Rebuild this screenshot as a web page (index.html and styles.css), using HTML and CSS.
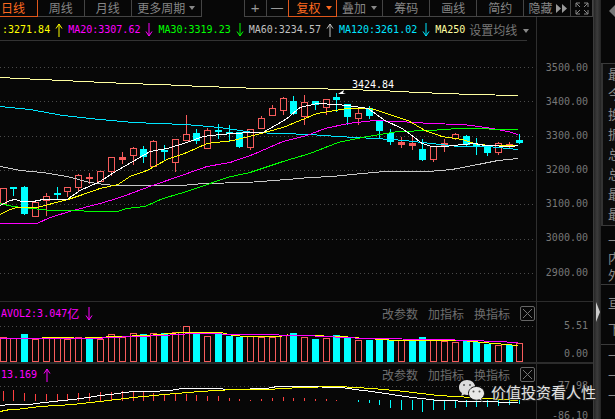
FILE: index.html
```html
<!DOCTYPE html>
<html lang="zh-CN">
<head>
<meta charset="utf-8">
<title>K线</title>
<link rel="stylesheet" href="styles.css">
</head>
<body>
<svg class="defs" width="0" height="0">
  <symbol id="up" viewBox="0 0 10 14"><path d="M5 14V1M2 5.5 5 1l3 4.500" fill="none" stroke="currentColor"/></symbol>
  <symbol id="down" viewBox="0 0 10 14"><path d="M5 0v13M2 8.500 5 13l3-4.500" fill="none" stroke="currentColor"/></symbol>
</svg>
<div class="app">
  <div class="main">
    <nav class="toolbar">
      <span class="btn active first">日线</span>
      <span class="btn">周线</span>
      <span class="btn">月线</span>
      <span class="btn more">更多周期<i class="caret"></i></span>
      <span class="zoom-group"><span class="sq">+</span><span class="sq">—</span></span>
      <span class="btn active boxed">复权<i class="caret"></i></span>
      <span class="btn">叠加<i class="caret"></i></span>
      <span class="btn">筹码</span>
      <span class="btn">画线</span>
      <span class="btn">简约</span>
      <span class="btn hide">隐藏<svg class="dbl" width="12" height="9" viewBox="0 0 12 9"><path d="M1 0l5 4.500L1 9zM7 0l5 4.500L7 9z" fill="#999"/></svg></span>
      <span class="expand"><svg width="14" height="13" viewBox="0 0 14 13"><path d="M1 1l4 4M1 1h4M1 1v4M13 1 9 5M13 1H9M13 1v4M1 12l4-4M1 12h4M1 12V8M13 12 9 8M13 12H9M13 12V8" fill="none" stroke="#888"/></svg></span>
    </nav>
    <section class="pane pane-main">
      <div class="plot">
        <div class="ma-row">
          <span class="c-y">:3271.84</span><svg class="arr c-y"><use href="#up"/></svg>
          <span class="c-m">MA20:3307.62</span><svg class="arr c-m"><use href="#down"/></svg>
          <span class="c-g">MA30:3319.23</span><svg class="arr c-g"><use href="#down"/></svg>
          <span class="c-w">MA60:3234.57</span><svg class="arr c-w"><use href="#up"/></svg>
          <span class="c-c">MA120:3261.02</span><svg class="arr c-c"><use href="#down"/></svg>
          <span class="c-p">MA250</span>
          <span class="setting">设置均线<i class="caret"></i></span>
        </div>
        <div class="chart-wrap">
          <svg id="kline" class="chart" width="536" height="260" viewBox="0 41 536 260"></svg>
          <span class="high">3424.84</span>
        </div>
      </div>
      <div class="axis axis-main">
        <span>3500.00</span><span>3400.00</span><span>3300.00</span><span>3200.00</span><span>3100.00</span><span>3000.00</span><span>2900.00</span>
      </div>
    </section>
    <section class="pane pane-vol">
      <div class="plot">
        <div class="head">
          <span class="title c-m">AVOL2:3.047<b>亿</b><svg class="arr"><use href="#down"/></svg></span>
          <span class="tools"><span>改参数</span><span>加指标</span><span>换指标</span><i class="close"><svg width="11" height="11" viewBox="0 0 11 11"><path d="M1 1l9 9M10 1l-9 9" stroke="#777"/></svg></i></span>
        </div>
        <svg id="vol" class="chart" width="536" height="38" viewBox="0 324 536 38"></svg>
      </div>
      <div class="axis axis-vol"><span>5.51</span><span>0.00</span></div>
    </section>
    <section class="pane pane-macd">
      <div class="plot">
        <div class="head">
          <span class="title c-m">13.169<svg class="arr"><use href="#up"/></svg></span>
          <span class="tools"><span>改参数</span><span>加指标</span><span>换指标</span><i class="close"><svg width="11" height="11" viewBox="0 0 11 11"><path d="M1 1l9 9M10 1l-9 9" stroke="#777"/></svg></i></span>
        </div>
        <svg id="macd" class="chart" width="536" height="34" viewBox="0 385 536 34"></svg>
      </div>
      <div class="axis axis-macd"><span>77.98</span><span>-86.10</span></div>
    </section>
  </div>
  <div class="rail"><i class="rail-arrow"></i></div>
  <aside class="side">
    <div class="side-top"><i class="side-arrow"></i></div>
    <div class="side-list s1"><span>最新</span><span>今开</span><span>换手</span><span>振幅</span><span>总手</span><span>总额</span><span>最高</span><span>最低</span></div>
    <div class="side-list s2"><span>一</span><span>内盘</span><span>外盘</span></div>
    <div class="side-list s3"><span>亘</span><span>下</span></div>
    <div class="side-list s4"><span>一</span><span>一</span><span>一</span></div>
  </aside>
</div>
<div class="watermark">
  <svg width="26" height="23" viewBox="0 0 26 23">
    <path d="M8 0c4.600 0 8.200 3.200 8.200 7.400 0 4.200-3.600 7.600-8.200 7.600-1 0-2-.2-2.900-.4L2.400 16l.5-3C1 11.700 0 9.700 0 7.400 0 3.200 3.500 0 8 0z" fill="#dcdcdc"/>
    <path d="M17.500 6.500c4.400 0 8 3 8 6.800 0 2.200-1.100 4-2.900 5.300l.6 2.700-2.800-1.500c-.9.200-1.900.4-2.900.4-4.400 0-8-3-8-6.900s3.600-6.800 8-6.800z" fill="#e8e8e8" stroke="#111" stroke-width="1"/>
    <circle cx="5" cy="5" r="1" fill="#555"/><circle cx="11" cy="5" r="1" fill="#555"/>
    <circle cx="14.500" cy="11.500" r="1" fill="#555"/><circle cx="20.500" cy="11.500" r="1" fill="#555"/>
  </svg>
  <span>价值投资看人性</span>
</div>
<script src="chart.js"></script>
</body>
</html>
```
FILE: styles.css
```css
* { box-sizing: border-box; }
html, body { margin: 0; padding: 0; background: #070707; }
body { width: 615px; height: 419px; overflow: hidden; position: relative; font-family: "DejaVu Sans Mono", "Noto Sans CJK SC", monospace; font-size: 10px; color: #808080; }
.defs { position: absolute; }
.app { display: flex; width: 615px; height: 419px; }
.main { width: 594px; flex: none; border-right: 1px solid #3a3a3a; display: flex; flex-direction: column; }

.toolbar { display: flex; height: 17px; flex: none; font: 12px/16px "Noto Sans CJK SC", sans-serif; color: #858585; }
.btn { width: 47px; height: 17px; border-right: 1px solid #444; border-bottom: 1px solid #444; text-align: center; white-space: nowrap; display: flex; align-items: center; justify-content: center; }
.btn.first { width: 38px; justify-content: flex-start; padding-left: 1px; }
.btn.more { width: 70px; }
.btn.more .caret { margin-left: 4px; }
.btn .caret { margin-left: 5px; }
.btn.active { color: #ff6a1f; border-color: #e0571b; }
.btn.active .caret { border-top-color: #ff6a1f; }
.btn.boxed { width: 49px; border-left: 1px solid #e0571b; justify-content: flex-start; padding-left: 8px; }
.hide { padding-left: 1px; }
.dbl { margin-left: 2px; }
.zoom-group { display: flex; margin-left: 42px; border-left: 1px solid #444; height: 17px; }
.sq { width: 22px; height: 17px; border-right: 1px solid #444; border-bottom: 1px solid #444; display: flex; align-items: center; justify-content: center; font: 15px/16px "Liberation Sans", sans-serif; color: #999; }
.sq:last-child { border-right: 0; width: 21px; font-size: 12px; }
.expand { width: 22px; border-right: 1px solid #444; border-bottom: 1px solid #444; display: flex; align-items: center; justify-content: center; }
.caret { display: inline-block; width: 0; height: 0; border: 3px solid transparent; border-top: 4px solid #888; border-bottom: 0; }

.pane { display: flex; flex: none; }
.pane-main { height: 284px; }
.pane-vol { height: 61px; }
.pane-macd { height: 57px; }
.plot { width: 536px; flex: none; display: flex; flex-direction: column; min-width: 0; }
.chart { display: block; flex: none; }
.chart-wrap { position: relative; width: 536px; height: 260px; }
.high { position: absolute; left: 352px; top: 38px; color: #fff; font-size: 10px; line-height: 12px; }

.ma-row { height: 24px; width: 527px; flex: none; border-bottom: 1px solid #333; padding: 2px 0 0 2px; display: flex; align-items: center; gap: 4px; white-space: nowrap; }
.arr { width: 10px; height: 14px; flex: none; }
.c-y { color: #ffff00; }
.c-m { color: #ff00ff; }
.c-g { color: #00ff00; }
.c-w { color: #c0c0c0; }
.c-c { color: #00e5ff; }
.c-p { color: #ffffa0; }
.setting { font: 12px "Noto Sans CJK SC", sans-serif; color: #777; }
.setting .caret { margin-left: 6px; vertical-align: 2px; }

.axis { width: 57px; flex: none; border-left: 1px solid #2f2f2f; display: flex; flex-direction: column; align-items: flex-end; padding-right: 5px; color: #777; }
.axis-main { padding-top: 33.500px; }
.axis-main span { height: 34.200px; line-height: 34.200px; }
.axis-vol { padding-top: 10px; }
.axis-vol span { height: 28px; line-height: 28px; }
.axis-macd { padding-top: 7px; }
.axis-macd span { height: 29.500px; line-height: 29.500px; }

.pane-vol { border-top: 1px solid #2c2c2c; }
.pane-macd { border-top: 2px solid #2c2c2c; }
.head { display: flex; justify-content: space-between; align-items: center; flex: none; padding: 0 1px 0 1px; }
.pane-vol .head { height: 23px; }
.pane-macd .head { height: 21px; }
.title { display: flex; align-items: center; white-space: nowrap; }
.title b { font: 12px "Noto Sans CJK SC", sans-serif; }
.title .arr { margin-left: 5px; }
.tools { display: flex; align-items: center; gap: 10px; font: 12px "Noto Sans CJK SC", sans-serif; color: #6e6e6e; white-space: nowrap; }
.close { width: 15px; height: 15px; border: 1px solid #666; border-radius: 2px; display: flex; align-items: center; justify-content: center; }

.rail { width: 7px; flex: none; background: linear-gradient(90deg, #262626, #3c3c3c 45%, #242424); display: flex; align-items: flex-start; padding: 302px 0 0 2px; }
.rail-arrow { width: 0; height: 0; border-left: 4px solid #ccc; border-top: 10px solid transparent; border-bottom: 10px solid transparent; }

.side { flex: 1; min-width: 0; overflow: hidden; display: flex; flex-direction: column; font: 13px "Noto Sans CJK SC", sans-serif; color: #8a8a8a; }
.side-top { height: 64px; flex: none; border-bottom: 1px solid #3a3a3a; padding: 5px 0 0 8px; border-top: 0; }
.side-arrow { display: block; width: 0; height: 0; border-right: 6px solid #777; border-top: 6px solid transparent; border-bottom: 6px solid transparent; }
.side-list { display: flex; flex-direction: column; flex: none; padding-left: 7px; border-bottom: 1px solid #3a3a3a; white-space: nowrap; }
.side-list span { display: block; }
.s1 { height: 162px; border-left: 2px solid #333; padding-left: 5px; background: #0c0c0c; }
.s1 span { height: 20px; line-height: 20px; }
.s2 { height: 59px; padding-top: 5px; }
.s2 span { height: 17.500px; line-height: 17.500px; }
.s3 { height: 60px; padding-top: 5px; }
.s3 span { height: 26px; line-height: 26px; }
.s4 { border-bottom: 0; }
.s4 span { height: 20px; line-height: 20px; }

.watermark { position: absolute; left: 459px; top: 380px; display: flex; align-items: center; gap: 6px; font: 15px/22px "Noto Sans CJK SC", sans-serif; color: #e2e2e2; text-shadow: 0 0 2px #222, 1px 1px 1px #333; white-space: nowrap; }
```
FILE: chart.js
```js
var NS = "http://www.w3.org/2000/svg";
var CX = [3,13,24,35,46,57,67,78,89,100,111,122,133,143,153,164,175,186,196,207,218,229,239,250,261,272,283,293,304,315,326,336,347,358,369,379,390,401,412,422,433,444,455,466,476,487,498,509,519];

// color, body top, body bottom, wick top, wick bottom
var K = [
["r",188,203,188,203],["c",187,188,187,195],["c",187,214,186,214],["r",202,216,202,216],["r",196,200,193,215],
["c",193,194,187,199],["r",187,191,187,196],["r",175,187,174,190],["r",177,178,173,183],["r",171,181,171,181],
["r",157,171,157,175],["r",157,159,152,163],["r",148,155,147,164],["c",149,157,146,162],["r",141,166,140,166],
["c",150,151,145,160],["r",139,162,139,171],["r",134,140,115,140],["c",133,141,129,143],["r",130,148,128,148],
["c",130,131,124,138],["c",132,133,125,141],["c",132,147,132,147],["r",129,147,129,149],["r",118,128,116,128],
["r",108,115,105,115],["r",98,110,97,114],["c",101,114,96,114],["r",102,116,95,124],["c",101,105,101,109],
["r",99,107,99,114],["c",97,100,93,111],["c",104,117,104,124],["r",113,118,108,124],["c",108,116,106,118],
["c",121,131,121,137],["c",133,142,129,144],["r",142,144,137,147],["r",143,145,136,149],["c",149,160,139,160],
["r",146,159,146,161],["r",143,145,139,151],["r",134,138,133,139],["c",136,145,135,146],["c",144,146,138,154],
["c",146,153,146,155],["r",143,152,142,154],["r",144,146,142,148],["c",140,142,134,143]
];

var LINES = [
["#ffffa0",[0,77,19,78,41,79,62,80,83,81,105,82,127,83,159,84,182,85,202,86,235,87,257,88,310,88,345,89,380,90,418,92,472,94,518,95]],
["#00e5ff",[0,106,30,109,63,115,100,119,133,122,185,124,220,127,253,132,310,134,338,136,375,138,405,140,458,146,488,146,518,149]],
["#c8c8c8",[0,166,20,170,43,172,67,176,90,182,105,184,115,185,182,185,203,183,247,182,287,179,310,177,332,176,362,173,385,171,428,171,452,169,478,164,498,160,518,158]],
["#ff00ff",[0,223,37,223,50,217,73,210,100,203,120,197,147,187,167,180,190,172,207,166,230,162,253,154,283,141,307,135,325,128,348,123,375,120,395,121,418,122,428,123,462,124,472,125,492,128,508,131,518,134]],
["#00ff00",[0,203,13,206,33,208,50,210,117,211,127,208,145,206,163,198,187,191,213,182,227,177,250,172,283,161,310,153,338,142,362,137,398,131,430,130,458,128,518,129]],
["#ffff00",[0,214,10,209,17,207,37,207,68,199,83,194,100,188,118,184,130,176,147,170,167,159,187,152,207,143,233,140,257,134,283,127,317,113,347,108,370,108,378,110,392,115,408,120,425,130,442,136,462,139,478,144,492,145,518,145]],
["#ffffff",[0,205,10,200,15,199,22,201,33,201,43,199,67,199,80,190,100,181,117,170,133,161,150,151,167,148,187,142,203,136,220,134,250,132,263,132,277,124,287,118,300,107,317,103,337,104,355,106,368,108,385,120,402,128,412,135,422,143,432,146,445,146,462,144,475,143,485,145,512,146,518,145]]
];

var VOLC = "rrcrrrrrcrrrrcrcrrcrcccrrrrcrcrccrcccrccrrrcccrcr".split("");
var VOLT = [124,127,114,130,127,127,130,124,128,128,115,124,112,114,112,111,108,91,113,121,113,120,123,121,122,122,117,111,124,129,126,118,125,133,131,128,131,133,128,124,130,135,138,133,137,144,147,148,142];

var VOLMA = [
["#ffff00",[30,337.5,42,336.5,73,336,75,337,117,335,148,334,170,332,183,331,202,331,223,331.5,233,334,247,335,277,335.5,287,333.5,305,334,342,335,365,337,385,338,398,339.5,462,339,472,340,518,344]],
["#ff00ff",[0,337,100,337,105,336,140,335,180,333,190,332,253,333,305,334,365,337,438,338,472,339,518,341]]
];

var DIF = [0,405.5,8,404,30,404,40,402.5,53,401,73,399,88,397,100,395,110,394,133,391,150,391,170,390,182,388,213,388,233,389,267,388,277,386,300,386,342,387,355,389,372,391,405,396,438,400,518,402];
var DEA = [0,411,10,409,20,408.5,40,406,73,404,100,401,133,397,170,393.5,200,391,233,389,267,389,300,387,338,386,372,388,405,391,438,395,472,397,518,400];
var HIST_TOP = [287,285,293,296,297,297,297,293,294,292,292,288,288,290,293,296,297,296,300,303,303,308,312,315,312,308,305,308,308,312,312,315];
var HIST_DOWN = [316,320,325,331,339,345,345,350,345,344,339,337,335,335,332,330,327];

function el(parent, name, attrs) {
  var e = document.createElementNS(NS, name);
  for (var k in attrs) e.setAttribute(k, attrs[k]);
  parent.appendChild(e);
  return e;
}
function poly(svg, color, pts) {
  var s = "";
  for (var i = 0; i < pts.length; i += 2) s += pts[i] + "," + (pts[i + 1] + .5) + " ";
  el(svg, "polyline", { points: s, fill: "none", stroke: color, "stroke-width": 1, "shape-rendering": "crispEdges" });
}
function grid(svg, y) {
  el(svg, "path", { d: "M0 " + (y + .5) + "H536", stroke: "#4a4a4a", "stroke-dasharray": "1 3", "shape-rendering": "crispEdges" });
}
var RED = "#f75c5c", CYAN = "#00ffff";

var k = document.getElementById("kline");
[67,101,136,170,204,239,273].forEach(function (y) { grid(k, y); });
K.forEach(function (c, i) {
  var x = CX[i], col = c[0] === "r" ? RED : CYAN, thin = c[2] - c[1] < 3;
  el(k, "path", { d: "M" + (x + .5) + " " + c[3] + "V" + (c[4] + 1), stroke: col, "shape-rendering": "crispEdges" });
  if (col === CYAN || thin) {
    el(k, "rect", { x: x - 3, y: c[1], width: 7, height: c[2] - c[1] + (thin ? 1 : 0), fill: col, "shape-rendering": "crispEdges" });
  } else {
    el(k, "rect", { x: x - 2.5, y: c[1] + .5, width: 6, height: c[2] - c[1], fill: "#070707", stroke: col, "shape-rendering": "crispEdges" });
  }
});
LINES.forEach(function (l) { poly(k, l[0], l[1]); });
el(k, "path", { d: "M338 94l6-4-1 3 3 1z", fill: "#fff" });

var v = document.getElementById("vol");
grid(v, 325); grid(v, 361);
VOLT.forEach(function (t, i) {
  var x = CX[i], top = Math.round(295 + t / 3);
  if (VOLC[i] === "c") {
    el(v, "rect", { x: x - 3, y: top, width: 7, height: 361 - top, fill: CYAN, "shape-rendering": "crispEdges" });
  } else {
    el(v, "rect", { x: x - 2.5, y: top + .5, width: 6, height: 361 - top - 1, fill: "#070707", stroke: RED, "shape-rendering": "crispEdges" });
  }
});
VOLMA.forEach(function (l) { poly(v, l[0], l[1]); });

var m = document.getElementById("macd");
grid(m, 386);
HIST_TOP.forEach(function (t, i) {
  el(m, "path", { d: "M" + (CX[i] + .5) + " " + Math.round(295 + t / 3) + "V401", stroke: "#ff4040", "shape-rendering": "crispEdges" });
});
HIST_DOWN.forEach(function (b, i) {
  el(m, "path", { d: "M" + (CX[i + 32] + .5) + " 400V" + Math.round(295 + b / 3), stroke: CYAN, "shape-rendering": "crispEdges" });
});
poly(m, "#ffffff", DIF);
poly(m, "#ffff00", DEA);
```
